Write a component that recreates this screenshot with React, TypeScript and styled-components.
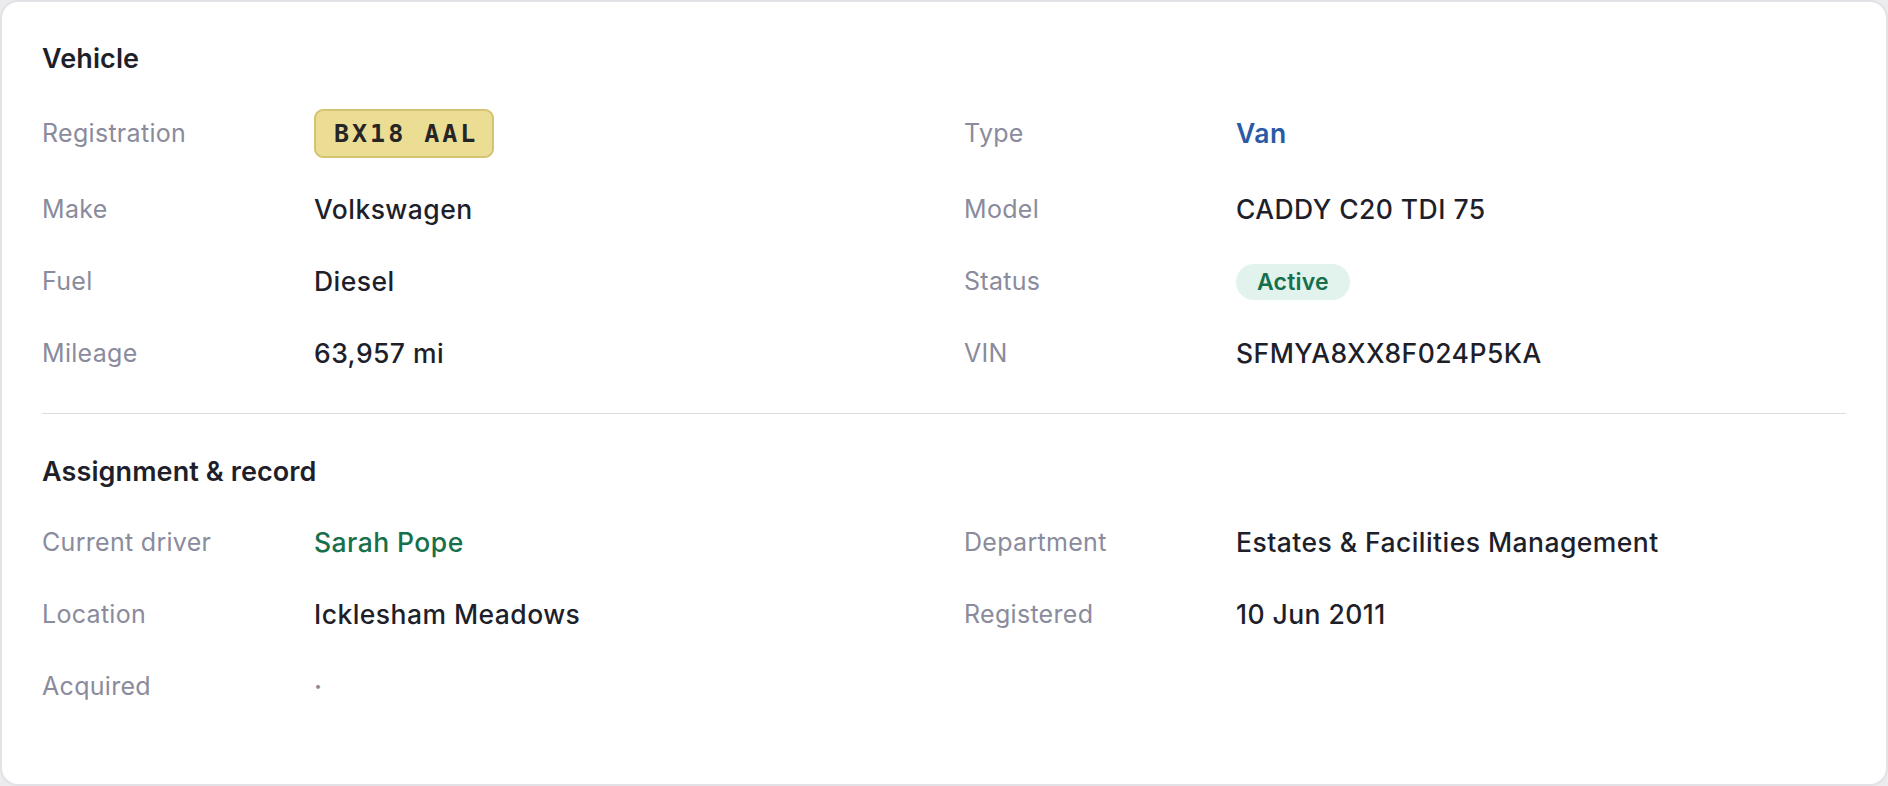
import {ReactElement, ReactNode} from "react";
import styled, {createGlobalStyle} from "styled-components";

const GlobalStyle = createGlobalStyle`
  html, body {
    margin: 0;
    padding: 0;
    background: #ececef;
  }
  body {
    font-family: Inter, "Noto Sans", "Liberation Sans", sans-serif;
    -webkit-font-smoothing: antialiased;
  }
  * {
    box-sizing: border-box;
  }
`

// Styled Components
const Card = styled.article`
  min-height: 786px;
  background: #ffffff;
  border: 2px solid #e2e2e6;
  border-radius: 18px;
  padding: 40px 40px 36px;
`

const Section = styled.section<{ $divided?: boolean }>`
  padding-top: ${({$divided}) => ($divided ? "41px" : "0")};
  padding-bottom: 39px;
  border-top: ${({$divided}) => ($divided ? "1px solid #dedee2" : "none")};
`

const Heading = styled.h2`
  margin: 0 0 33px;
  font-size: 27px;
  line-height: 34px;
  font-weight: 600;
  color: #1e1f2b;
  letter-spacing: 0.1px;
`

const Grid = styled.div`
  display: grid;
  grid-template-columns: 1fr 1fr;
  column-gap: 40px;
  row-gap: 31px;
`

const Field = styled.div`
  display: grid;
  grid-template-columns: 272px 1fr;
  align-items: center;
  min-height: 41px;
`

const Label = styled.span`
  font-size: 25px;
  line-height: 41px;
  font-weight: 400;
  letter-spacing: 0.3px;
  color: #8a8b9c;
`

type Tone = "default" | "blue" | "green" | "muted";

const toneColor: Record<Tone, string> = {
  default: "#1e1f2b",
  blue: "#2a5aa6",
  green: "#15704b",
  muted: "#8a8b9c",
}

const Value = styled.span<{ $tone?: Tone; $bold?: boolean }>`
  font-size: 26.5px;
  line-height: 41px;
  font-weight: ${({$bold}) => ($bold ? 600 : 500)};
  letter-spacing: 0.45px;
  color: ${({$tone}) => toneColor[$tone ?? "default"]};
`

const Plate = styled.span`
  justify-self: start;
  display: inline-flex;
  align-items: center;
  height: 49px;
  padding: 0 14px 0 18px;
  background: #ecdd95;
  border: 2px solid #d5c272;
  border-radius: 9px;
  font-family: "DejaVu Sans Mono", "Liberation Mono", monospace;
  font-size: 25px;
  font-weight: 700;
  letter-spacing: 3px;
  color: #262626;
`

const Badge = styled.span`
  justify-self: start;
  display: inline-flex;
  align-items: center;
  height: 36px;
  padding: 0 21px;
  border-radius: 18px;
  background: #e1f3ec;
  color: #16704c;
  font-size: 23px;
  font-weight: 600;
  letter-spacing: 0.2px;
`

interface Item {
  label: string;
  value: ReactNode;
}

const vehicle: Item[] = [
  {label: "Registration", value: <Plate>BX18 AAL</Plate>},
  {label: "Type", value: <Value $tone="blue" $bold>Van</Value>},
  {label: "Make", value: <Value>Volkswagen</Value>},
  {label: "Model", value: <Value>CADDY C20 TDI 75</Value>},
  {label: "Fuel", value: <Value>Diesel</Value>},
  {label: "Status", value: <Badge>Active</Badge>},
  {label: "Mileage", value: <Value>63,957 mi</Value>},
  {label: "VIN", value: <Value>SFMYA8XX8F024P5KA</Value>},
]

const assignment: Item[] = [
  {label: "Current driver", value: <Value $tone="green">Sarah Pope</Value>},
  {label: "Department", value: <Value>Estates &amp; Facilities Management</Value>},
  {label: "Location", value: <Value>Icklesham Meadows</Value>},
  {label: "Registered", value: <Value>10 Jun 2011</Value>},
  {label: "Acquired", value: <Value $tone="muted">·</Value>},
]

const FieldGrid = ({items}: { items: Item[] }): ReactElement => (
    <Grid>
        {items.map((item) => (
            <Field key={item.label}>
                <Label>{item.label}</Label>
                {item.value}
            </Field>
        ))}
    </Grid>
)

const App = (): ReactElement => (
    <>
        <GlobalStyle/>
        <Card>
            <Section>
                <Heading>Vehicle</Heading>
                <FieldGrid items={vehicle}/>
            </Section>
            <Section $divided>
                <Heading>Assignment &amp; record</Heading>
                <FieldGrid items={assignment}/>
            </Section>
        </Card>
    </>
)

export default App
